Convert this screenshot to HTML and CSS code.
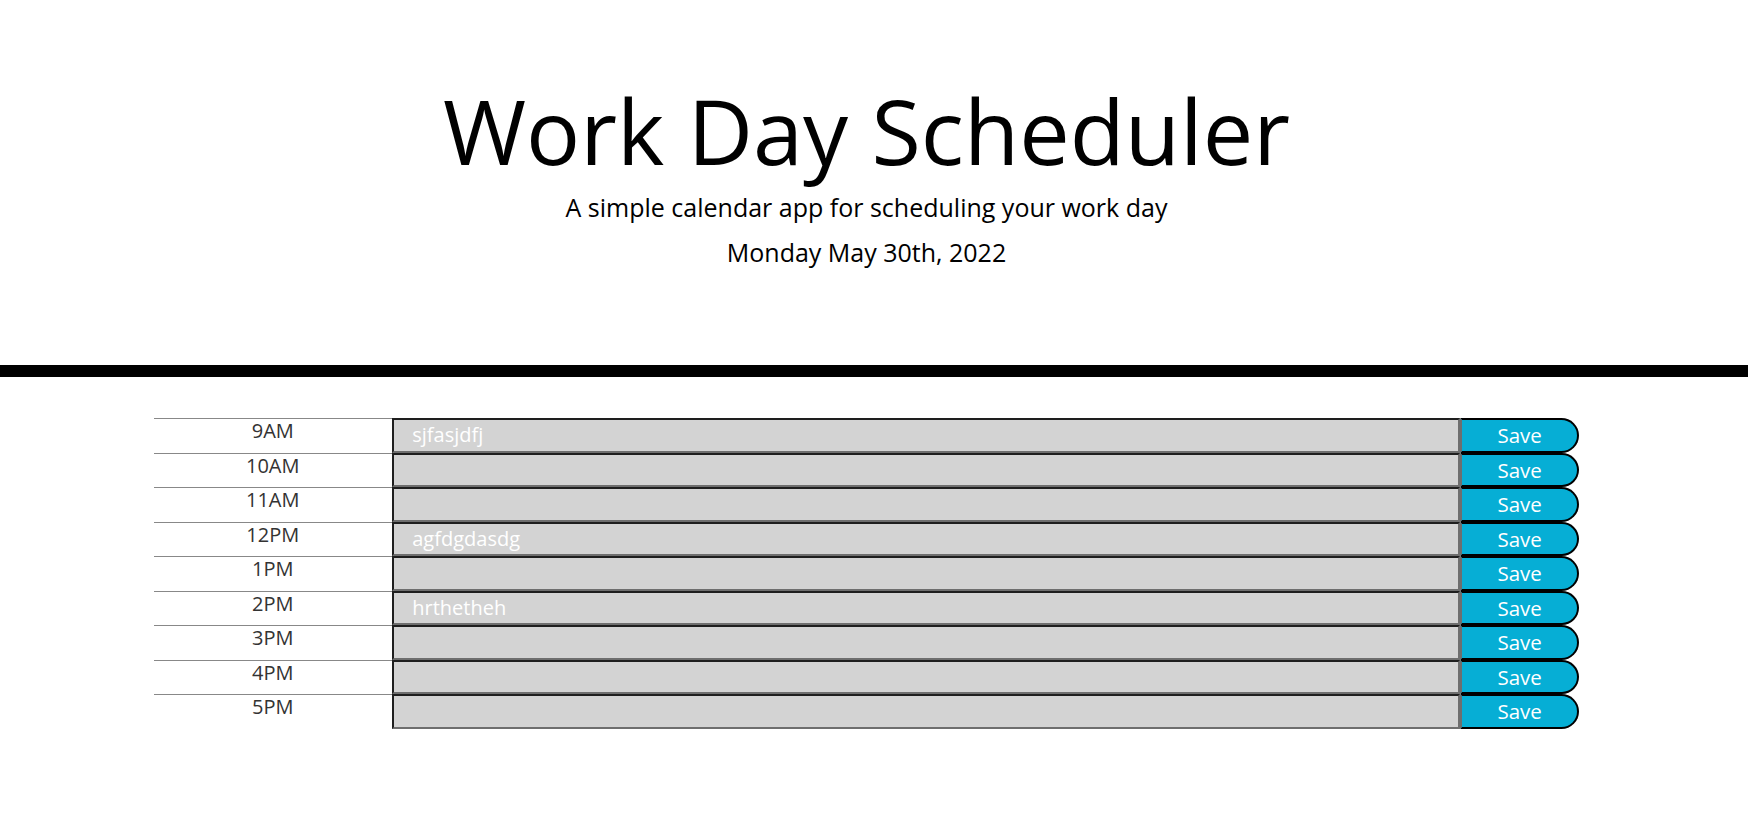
FILE: index.html
```html
<!DOCTYPE html>
<html lang="en">
<head>
<meta charset="utf-8">
<title>Work Day Scheduler</title>
<link rel="stylesheet" href="styles.css">
</head>
<body>
<header class="jumbotron">
  <h1 class="display">Work Day Scheduler</h1>
  <p class="lead">A simple calendar app for scheduling your work day</p>
  <p class="lead current-day">Monday May 30th, 2022</p>
</header>
<main class="container">
  <div class="time-block"><div class="hour">9AM</div><textarea class="description past">sjfasjdfj</textarea><button class="saveBtn">Save</button></div>
  <div class="time-block"><div class="hour">10AM</div><textarea class="description past"></textarea><button class="saveBtn">Save</button></div>
  <div class="time-block"><div class="hour">11AM</div><textarea class="description past"></textarea><button class="saveBtn">Save</button></div>
  <div class="time-block"><div class="hour">12PM</div><textarea class="description past">agfdgdasdg</textarea><button class="saveBtn">Save</button></div>
  <div class="time-block"><div class="hour">1PM</div><textarea class="description past"></textarea><button class="saveBtn">Save</button></div>
  <div class="time-block"><div class="hour">2PM</div><textarea class="description past">hrthetheh</textarea><button class="saveBtn">Save</button></div>
  <div class="time-block"><div class="hour">3PM</div><textarea class="description past"></textarea><button class="saveBtn">Save</button></div>
  <div class="time-block"><div class="hour">4PM</div><textarea class="description past"></textarea><button class="saveBtn">Save</button></div>
  <div class="time-block"><div class="hour">5PM</div><textarea class="description past"></textarea><button class="saveBtn">Save</button></div>
</main>
</body>
</html>
```
FILE: styles.css
```css
* { box-sizing: border-box; }
html, body { margin: 0; padding: 0; background: #fff; }
body {
  font-family: "Open Sans", "Noto Sans", sans-serif;
  color: #212529;
}
.jumbotron {
  text-align: center;
  padding: 76px 15px 94px 0;
  border-bottom: 12px solid #000;
  margin-bottom: 41px;
}
.display {
  margin: 0;
  font-size: 90px;
  font-weight: 400;
  line-height: 1.2;
  color: #000;
}
.lead {
  margin: 5px 0 0;
  font-size: 25px;
  font-weight: 400;
  line-height: 1.5;
  color: #000;
}
.current-day { margin-top: 7px; }
.container {
  width: 1425px;
  margin-left: 154px;
}
.time-block {
  display: grid;
  grid-template-columns: 237.5px 1068.75px 118.75px;
  height: 34.5px;
}
.hour {
  border-top: 1px solid #888;
  padding-top: 2px;
  text-align: center;
  font-size: 20px;
  line-height: 20px;
  color: #333;
}
.description {
  height: 34.5px;
  margin: 0;
  padding: 0 18.75px;
  resize: none;
  overflow: hidden;
  font-family: "Open Sans", "Noto Sans", sans-serif;
  font-size: 20px;
  line-height: 1.5;
  color: #fff;
  border-style: solid;
  border-width: 2px;
  border-color: #1e1e1e #6e6e6e #6e6e6e #1e1e1e;
  outline: none;
}
.past { background-color: #d3d3d3; }
.saveBtn {
  height: 34.5px;
  margin: 0;
  padding: 0;
  background-color: #06aed5;
  color: #fff;
  font-family: "Open Sans", "Noto Sans", sans-serif;
  font-size: 20.5px;
  border: 2px solid #000;
  border-left: 2px solid #6e6e6e;
  border-radius: 0 18px 18px 0;
}
```
